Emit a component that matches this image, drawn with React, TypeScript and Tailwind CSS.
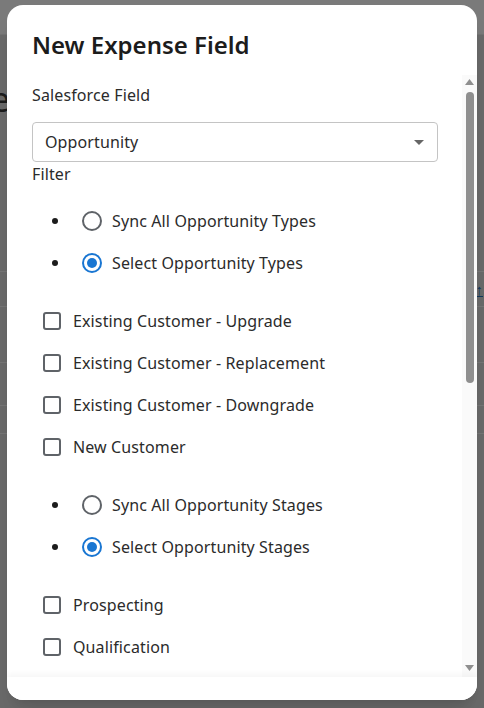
const typeOptions = [
  'Existing Customer - Upgrade',
  'Existing Customer - Replacement',
  'Existing Customer - Downgrade',
  'New Customer',
];

const stageOptions = [
  'Prospecting',
  'Qualification',
  'Needs Analysis',
  'Value Proposition',
  'Id. Decision Makers',
  'Perception Analysis',
  'Proposal/Price Quote',
  'Negotiation/Review',
  'Closed Won',
  'Closed Lost',
];

const extraFields = [
  { label: 'Amount Field', value: 'Amount' },
  { label: 'Date Field', value: 'Close Date' },
  { label: 'Description Field', value: 'Description' },
];

function Radio({ label, checked }: { label: string; checked?: boolean }) {
  return (
    <li className="flex h-[42px] items-center">
      <span className="ml-[20px] h-[6px] w-[6px] rounded-full bg-[#1c1c1c]" />
      <label className="ml-[24px] flex items-center">
        {checked ? (
          <span className="flex h-5 w-5 items-center justify-center rounded-full border-2 border-[#1976d2]">
            <span className="h-[10px] w-[10px] rounded-full bg-[#1976d2]" />
          </span>
        ) : (
          <span className="h-5 w-5 rounded-full border-2 border-[#5f6368]" />
        )}
        <span className="ml-[10px]">{label}</span>
      </label>
    </li>
  );
}

function Check({ label }: { label: string }) {
  return (
    <label className="flex h-[42px] items-center pl-[11px]">
      <span className="h-[18px] w-[18px] rounded-[3px] border-2 border-[#5f6368]" />
      <span className="ml-[12px]">{label}</span>
    </label>
  );
}

function SelectBox({ value }: { value: string }) {
  return (
    <div className="mt-[15px] flex h-10 items-center justify-between rounded border border-[#c4c4c4] pl-[12px] pr-[13px]">
      <span>{value}</span>
      <svg width="10" height="5" viewBox="0 0 10 5">
        <path d="M0 0h10L5 5z" fill="#666" />
      </svg>
    </div>
  );
}

// classic scrollbar look for the dialog body
function ScrollTrack() {
  return (
    <div className="flex w-[15px] shrink-0 flex-col items-center bg-[#fafafa] pt-[4px] pb-[6px]">
      <svg width="9" height="6" viewBox="0 0 9 6">
        <path d="M0 6L4.5 0 9 6z" fill="#8f8f8f" />
      </svg>
      <div className="mt-[7px] h-[291px] w-[8px] rounded-full bg-[#8f8f8f]" />
      <div className="flex-1" />
      <svg width="9" height="6" viewBox="0 0 9 6">
        <path d="M0 0h9L4.5 6z" fill="#8f8f8f" />
      </svg>
    </div>
  );
}

export default function App() {
  return (
    <div className="relative h-[708px] w-[484px] overflow-hidden bg-[#6a6a6a] font-['Noto_Sans',sans-serif]">
      {/* page behind the dialog */}
      <div className="h-[35px] border-b border-[#727272] bg-[#7a7a7a]" />
      <div className="-ml-[9px] mt-[44px] text-[34px] leading-[40px] text-[#1c1c1c]">e</div>
      <div className="mt-[152px] flex h-[36px] items-center justify-end border-y border-[#767676] pr-[1px] text-[15px] font-bold text-[#12385c] underline">
        ↑
      </div>
      <div className="mt-[55px] border-t border-[#767676]" />
      <div className="mt-[42px] border-t border-[#767676]" />
      <div className="mt-[27px] border-t border-[#767676]" />

      {/* dialog */}
      <div className="absolute left-[7px] top-[5px] flex h-[695px] w-[470px] flex-col overflow-hidden rounded-2xl bg-white text-[16px] tracking-[0.12px] text-[#2b2b2b] shadow-xl">
        <div className="h-[70px] shrink-0 px-[25px] pt-[24px]">
          <h2 className="text-[24px] font-semibold leading-[32px] tracking-normal text-[#1c1c1c]">New Expense Field</h2>
        </div>

        <div className="flex min-h-0 flex-1">
          <div className="min-w-0 flex-1 overflow-y-auto pl-[25px] pr-[24px] pt-[8px] pb-[16px] [scrollbar-width:none]">
            <div className="leading-6">Salesforce Field</div>
            <SelectBox value="Opportunity" />
            <div className="leading-6">Filter</div>

            <ul className="mt-[14px]">
              <Radio label="Sync All Opportunity Types" />
              <Radio label="Select Opportunity Types" checked />
            </ul>
            <div className="mt-4">
              {typeOptions.map((t) => (
                <Check key={t} label={t} />
              ))}
            </div>

            <ul className="mt-4">
              <Radio label="Sync All Opportunity Stages" />
              <Radio label="Select Opportunity Stages" checked />
            </ul>
            <div className="mt-4">
              {stageOptions.map((s) => (
                <Check key={s} label={s} />
              ))}
            </div>

            {extraFields.map((f) => (
              <div key={f.label} className="mt-4">
                <div className="leading-6">{f.label}</div>
                <SelectBox value={f.value} />
              </div>
            ))}
          </div>
          <ScrollTrack />
        </div>

        <div className="h-[23px] shrink-0 bg-white shadow-[0_-3px_6px_rgba(0,0,0,0.04)]" />
      </div>
    </div>
  );
}
